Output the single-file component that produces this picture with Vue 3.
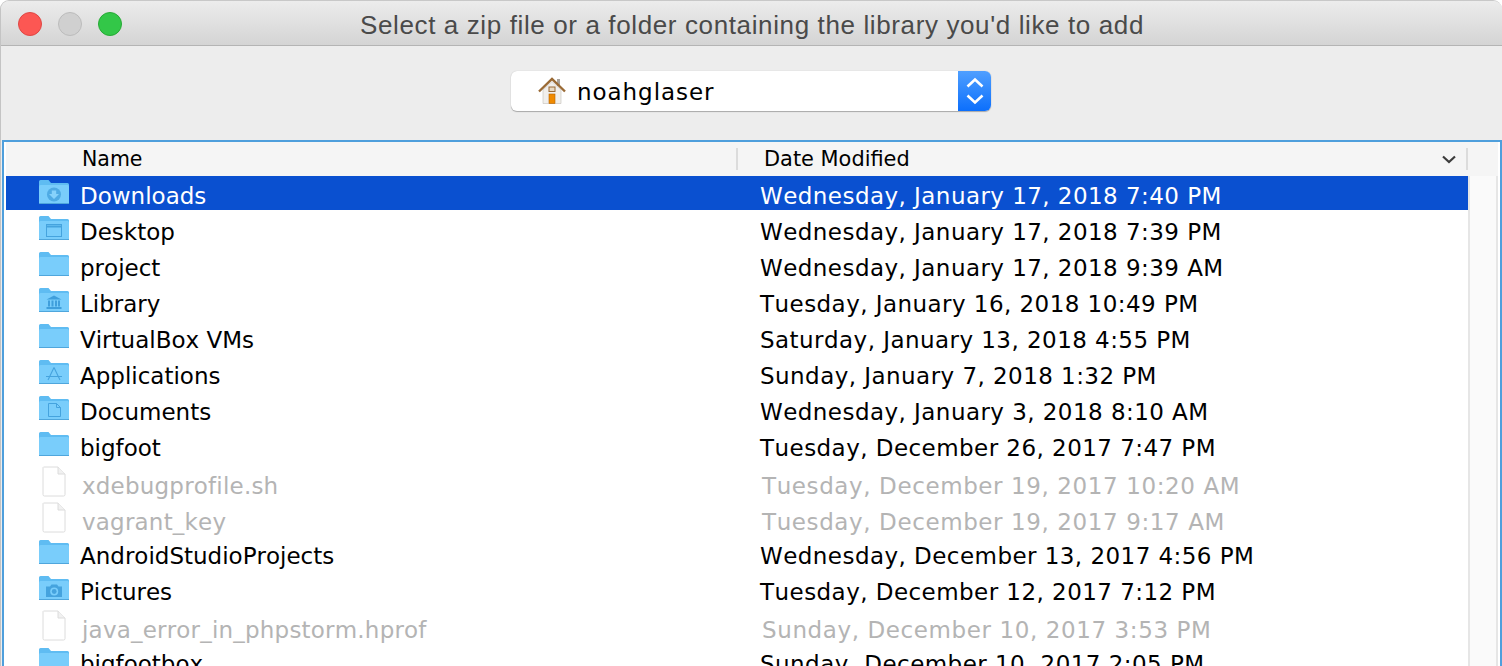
<template>
  <div class="window">
    <!-- Title bar -->
    <div class="titlebar">
      <div class="lights">
        <span class="light red"></span>
        <span class="light gray"></span>
        <span class="light green"></span>
      </div>
      <div class="title">Select a zip file or a folder containing the library you'd like to add</div>
    </div>

    <!-- Folder picker -->
    <div class="toolbar">
      <div class="select">
        <svg class="house" width="28" height="28" viewBox="0 0 28 28">
          <rect x="19" y="2" width="3" height="7" fill="#a8a29a" />
          <path d="M5 13L14 4.5L23 13V26.5H5Z" fill="#f1efec" stroke="#c4c0ba" stroke-width="0.6" />
          <path d="M1 14.5L14 2L27 14.5" fill="none" stroke="#9a6a35" stroke-width="2.4" />
          <rect x="11" y="10" width="6" height="4.5" fill="#e7d9c4" stroke="#9a6a35" />
          <rect x="11" y="17" width="6" height="9.5" fill="#f08a00" stroke="#b46200" stroke-width="0.6" />
        </svg>
        <span class="select-label">noahglaser</span>
        <span class="stepper">
          <svg width="22" height="32" viewBox="0 0 22 32" fill="none" stroke="#fff" stroke-width="2.6">
            <path d="M3.5 11.5L11 4.5L18.5 11.5" />
            <path d="M3.5 20.5L11 27.5L18.5 20.5" />
          </svg>
        </span>
      </div>
    </div>

    <!-- File table -->
    <div class="panel">
      <div class="head">
        <div class="head-name">Name</div>
        <div class="head-date">
          <span>Date Modified</span>
          <svg class="sort" width="14" height="9" viewBox="0 0 14 9" fill="none" stroke="#3c3c3c" stroke-width="2.2">
            <path d="M1 1.5L7 7L13 1.5" />
          </svg>
        </div>
      </div>
      <div class="body">
        <div class="list">
          <div
            v-for="row in rows"
            :key="row.name"
            :class="['row', { selected: row.selected, dim: row.file }]"
          >
            <div class="cell-name">
              <svg v-if="row.file" class="icon-file" width="24" height="31" viewBox="0 0 24 31">
                <path d="M1.5 1H16L23 8V28.5Q23 30 21.5 30H2.5Q1 30 1 28.5V1.5Z" fill="#fff" stroke="#dcdcdc" />
                <path d="M16 1V8H23" fill="#f1f1f1" stroke="#dcdcdc" />
              </svg>
              <svg v-else class="icon-folder" width="30" height="25" viewBox="0 0 30 25">
                <path d="M1 24Q0 24 0 23V1.5Q0 0 1.5 0H9.5L12 3H28.5Q30 3 30 4.5V23Q30 24 29 24Z" fill="#5fbcf2" />
                <path d="M0 6.5Q0 5 1.5 5H28.5Q30 5 30 6.5V23Q30 24 29 24H1Q0 24 0 23Z" fill="#79cdfb" />
                <rect x="0" y="23" width="30" height="1" fill="#4fa6dc" />
                <g v-if="row.glyph === 'download'">
                  <circle cx="15" cy="14.5" r="7" fill="#4fabe4" />
                  <path d="M12.8 10.5H17.2V14H20L15 19L10 14H12.8Z" fill="#86d2fb" />
                </g>
                <g v-if="row.glyph === 'window'" fill="none" stroke="#45a3de" stroke-width="1">
                  <rect x="7.5" y="8.5" width="15" height="12" />
                  <path d="M7.5 10.5H22.5" stroke-width="2" />
                </g>
                <g v-if="row.glyph === 'library'" fill="#3f9fdc">
                  <path d="M15 7.5L22.5 11.5H7.5Z" />
                  <rect x="9" y="12.5" width="2" height="6" />
                  <rect x="12.5" y="12.5" width="2" height="6" />
                  <rect x="16" y="12.5" width="2" height="6" />
                  <rect x="19" y="12.5" width="2" height="6" />
                  <rect x="7.5" y="19" width="15" height="2" />
                </g>
                <g v-if="row.glyph === 'apps'" fill="none" stroke="#45a3de" stroke-width="1.1">
                  <path d="M15 7.5L9 20M15 7.5L21 20M7 16.5H23" />
                </g>
                <g v-if="row.glyph === 'doc'" fill="none" stroke="#45a3de" stroke-width="1">
                  <path d="M9.5 7.5H17.5L21.5 11.5V20.5H9.5Z" />
                  <path d="M17.5 7.5V11.5H21.5" />
                </g>
                <g v-if="row.glyph === 'camera'">
                  <path d="M7 10.5H11L12.5 8.5H18L19.5 10.5H23V21H7Z" fill="#45a3de" />
                  <circle cx="15.2" cy="15.5" r="4" fill="#79cdfb" />
                  <circle cx="15.2" cy="15.5" r="2.4" fill="#45a3de" />
                </g>
              </svg>
              <span class="name">{{ row.name }}</span>
            </div>
            <div class="cell-date">{{ row.date }}</div>
          </div>
        </div>
        <div class="scrollbar"></div>
      </div>
    </div>
  </div>
</template>

<script setup>
// Rows of the file chooser, newest first
const rows = [
  { name: 'Downloads', date: 'Wednesday, January 17, 2018 7:40 PM', glyph: 'download', selected: true },
  { name: 'Desktop', date: 'Wednesday, January 17, 2018 7:39 PM', glyph: 'window' },
  { name: 'project', date: 'Wednesday, January 17, 2018 9:39 AM' },
  { name: 'Library', date: 'Tuesday, January 16, 2018 10:49 PM', glyph: 'library' },
  { name: 'VirtualBox VMs', date: 'Saturday, January 13, 2018 4:55 PM' },
  { name: 'Applications', date: 'Sunday, January 7, 2018 1:32 PM', glyph: 'apps' },
  { name: 'Documents', date: 'Wednesday, January 3, 2018 8:10 AM', glyph: 'doc' },
  { name: 'bigfoot', date: 'Tuesday, December 26, 2017 7:47 PM' },
  { name: 'xdebugprofile.sh', date: 'Tuesday, December 19, 2017 10:20 AM', file: true },
  { name: 'vagrant_key', date: 'Tuesday, December 19, 2017 9:17 AM', file: true },
  { name: 'AndroidStudioProjects', date: 'Wednesday, December 13, 2017 4:56 PM' },
  { name: 'Pictures', date: 'Tuesday, December 12, 2017 7:12 PM', glyph: 'camera' },
  { name: 'java_error_in_phpstorm.hprof', date: 'Sunday, December 10, 2017 3:53 PM', file: true },
  { name: 'bigfootbox', date: 'Sunday, December 10, 2017 2:05 PM' }
]
</script>

<style>
html,
body {
  margin: 0;
  overflow: hidden;
  background: #fff;
}
</style>

<style scoped>
.window {
  width: 1502px;
  height: 666px;
  display: flex;
  flex-direction: column;
  overflow: hidden;
  background: #ededed;
  box-sizing: border-box;
  border-left: 1px solid #c4c4c4;
  border-top: 1px solid #c8c8c8;
  border-top-left-radius: 9px;
  border-top-right-radius: 9px;
  font-family: "DejaVu Sans", sans-serif;
  font-kerning: none;
  color: #000;
}

.titlebar {
  height: 45px;
  flex: none;
  display: flex;
  align-items: center;
  box-sizing: border-box;
  border-bottom: 1px solid #b4b4b4;
  background: linear-gradient(#ececec, #d4d4d4);
  border-top-left-radius: 8px;
  border-top-right-radius: 8px;
}

.lights {
  display: flex;
  gap: 16px;
  padding: 2px 0 0 17px;
  width: 342px;
  flex: none;
}

.light {
  width: 24px;
  height: 24px;
  border-radius: 50%;
  box-sizing: border-box;
  border: 1px solid;
}

.red {
  background: #fc5753;
  border-color: #df4744;
}

.gray {
  background: #d0d0d0;
  border-color: #bcbcbc;
}

.green {
  background: #33c748;
  border-color: #27aa35;
}

.title {
  font-family: "Liberation Sans", sans-serif;
  font-kerning: normal;
  font-size: 26px;
  letter-spacing: 0.62px;
  color: #4a4a4a;
  white-space: nowrap;
  padding-top: 4px;
}

.toolbar {
  height: 94px;
  flex: none;
  display: flex;
  justify-content: center;
  box-sizing: border-box;
  padding-top: 25px;
}

.select {
  width: 480px;
  height: 40px;
  display: flex;
  align-items: center;
  box-sizing: border-box;
  background: #fff;
  border-radius: 6px;
  box-shadow: 0 1px 1px #a8a8a8, 0 0 1px #b8b8b8;
  padding-left: 27px;
  overflow: hidden;
  margin-left: -1px;
}

.select-label {
  font-size: 23px;
  letter-spacing: 0.95px;
  margin-left: 11px;
  flex: 1;
  padding-top: 1px;
}

.stepper {
  width: 33px;
  height: 40px;
  flex: none;
  display: flex;
  align-items: center;
  justify-content: center;
  background: linear-gradient(#4f9fff, #0c6ffc);
}

.panel {
  flex: 1;
  min-height: 0;
  margin-left: 1px;
  display: flex;
  flex-direction: column;
  box-sizing: border-box;
  border: 2px solid #4f9fdc;
  border-bottom: none;
  background: #fff;
  padding-left: 2px;
  padding-right: 2px;
}

.head {
  height: 34px;
  flex: none;
  display: grid;
  grid-template-columns: 730px 1fr;
  background: #f5f5f5;
  font-size: 20.9px;
  line-height: 35px;
}

.head-name {
  padding-left: 76px;
  font-size: 20.5px;
}

.head-date {
  position: relative;
  padding-left: 28px;
}

.head-date::before,
.head-date::after {
  content: "";
  position: absolute;
  top: 6px;
  width: 2px;
  height: 22px;
  background: #dcdcdc;
}

.head-date::before {
  left: 0;
}

.head-date::after {
  left: 730px;
}

.sort {
  position: absolute;
  left: 706px;
  top: 13px;
}

.body {
  flex: 1;
  min-height: 0;
  display: flex;
  overflow: hidden;
}

.list {
  width: 1462px;
  flex: none;
}

.scrollbar {
  flex: 1;
  background: #fafafa;
  border-left: 2px solid #e6e6e6;
  border-right: 2px solid #e6e6e6;
}

.row {
  height: 34px;
  margin-bottom: 2px;
  display: grid;
  grid-template-columns: 754px 1fr;
  align-items: center;
  font-size: 23px;
  white-space: nowrap;
}

.cell-name {
  display: flex;
  align-items: center;
  padding-left: 33px;
  height: 34px;
}

.name {
  padding: 6px 0 0 11px;
}

.cell-date {
  padding-top: 6px;
  letter-spacing: 0.45px;
}

.icon-folder {
  width: 30px;
  flex: none;
  margin-top: -2px;
}

.icon-file {
  flex: none;
  margin: 0 3px;
}

.selected {
  background: #0a50d0;
  color: #fff;
}

.dim {
  color: #b4b4b4;
}

.dim .name {
  padding-left: 13px;
  padding-top: 9px;
  letter-spacing: 0.2px;
}

.dim .cell-date {
  padding-left: 2px;
  padding-top: 9px;
  letter-spacing: 0.6px;
}
</style>
